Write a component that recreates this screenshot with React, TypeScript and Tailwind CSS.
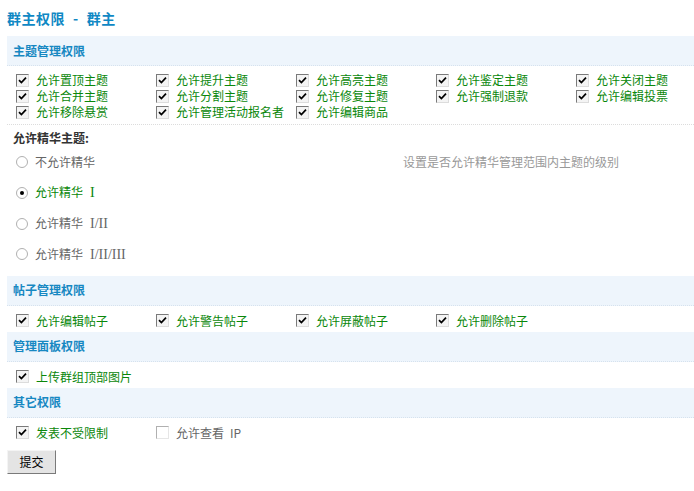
import React from 'react';

const font = { fontFamily: '"Noto Sans CJK SC", "Liberation Sans", sans-serif' };
const serif = { fontFamily: '"Liberation Serif", serif' };

const topicPerms = [
    '允许置顶主题', '允许提升主题', '允许高亮主题', '允许鉴定主题', '允许关闭主题',
    '允许合并主题', '允许分割主题', '允许修复主题', '允许强制退款', '允许编辑投票',
    '允许移除悬赏', '允许管理活动报名者', '允许编辑商品',
];

const postPerms = ['允许编辑帖子', '允许警告帖子', '允许屏蔽帖子', '允许删除帖子'];

const digestLevels = [
    { text: '不允许精华', num: '' },
    { text: '允许精华', num: 'I' },
    { text: '允许精华', num: 'I/II' },
    { text: '允许精华', num: 'I/II/III' },
];

const Check: React.FC<{ label: React.ReactNode; checked?: boolean }> = ({ label, checked = true }) => (
    <label className="flex items-center h-[16px] gap-[7px] w-[140px]">
        <span
            className={
                checked
                    ? 'w-[13px] h-[13px] border border-t-[#7a7a7a] border-l-[#7a7a7a] border-r-[#dcdcdc] border-b-[#dcdcdc] bg-[#f4f4f4] flex items-center justify-center shrink-0'
                    : 'w-[13px] h-[13px] border border-t-[#b0b0b0] border-l-[#b0b0b0] border-r-[#e6e6e6] border-b-[#e6e6e6] bg-white shrink-0'
            }
        >
            {checked && (
                <svg width="9" height="9" viewBox="0 0 9 9">
                    <path d="M1 4.2 L3.4 6.6 L8 1.6" stroke="#000" strokeWidth="1.7" fill="none" />
                </svg>
            )}
        </span>
        <span className={checked ? 'text-[12px] text-[#0a870a] whitespace-nowrap' : 'text-[12px] text-[#666] whitespace-nowrap'}>
            {label}
        </span>
    </label>
);

const SectionHeader: React.FC<{ title: string }> = ({ title }) => (
    <div className="h-[30px] bg-[#eef5fc] border-b border-dotted border-[#d6e2ee] flex items-center pl-[6px]">
        <span className="text-[12px] font-bold text-[#1788c2]">{title}</span>
    </div>
);

export default function App() {
    return (
        <div className="w-[694px] h-[491px] bg-white pl-[7px] pt-[7px] overflow-hidden" style={font}>
            <h1 className="h-[22px] leading-[22px] text-[14px] font-bold text-[#0f88c4] mb-[7px] tracking-[0.5px] flex">
                <span>群主权限</span>
                <span className="mx-[8px]">-</span>
                <span>群主</span>
            </h1>

            <SectionHeader title="主题管理权限" />
            <div className="grid grid-cols-[repeat(5,140px)] pl-[9px] pt-[6px] pb-[4px] border-b border-dotted border-[#dcdcdc]">
                {topicPerms.map((p) => (
                    <Check key={p} label={p} />
                ))}
            </div>

            <div className="h-[26px] flex items-center pl-[6px]">
                <span className="text-[12px] font-bold text-[#333]">允许精华主题:</span>
            </div>
            <div className="flex mt-[-4px] pb-[6px]">
                <div className="w-[396px] pl-[9px]">
                    {digestLevels.map((lv, i) => (
                        <div key={lv.text + lv.num} className="h-[30.67px] flex items-center gap-[7px]">
                            <span className="w-[12px] h-[12px] rounded-full border border-[#b0b0b0] bg-white flex items-center justify-center shrink-0">
                                {i === 1 && <span className="w-[4px] h-[4px] rounded-full bg-black" />}
                            </span>
                            <span className={i === 1 ? 'text-[12px] text-[#0a870a]' : 'text-[12px] text-[#666]'}>
                                {lv.text}
                                {lv.num && (
                                    <span className="ml-[7px] text-[14px]" style={serif}>
                                        {lv.num}
                                    </span>
                                )}
                            </span>
                        </div>
                    ))}
                </div>
                <div className="h-[30.67px] flex items-center">
                    <span className="text-[12px] text-[#999]">设置是否允许精华管理范围内主题的级别</span>
                </div>
            </div>

            <SectionHeader title="帖子管理权限" />
            <div className="h-[26px] flex pl-[9px] pt-[7px]">
                {postPerms.map((p) => (
                    <Check key={p} label={p} />
                ))}
            </div>

            <SectionHeader title="管理面板权限" />
            <div className="h-[26px] flex pl-[9px] pt-[7px]">
                <Check label="上传群组顶部图片" />
            </div>

            <SectionHeader title="其它权限" />
            <div className="h-[30px] flex pl-[9px] pt-[7px]">
                <Check label="发表不受限制" />
                <Check
                    label={
                        <>
                            允许查看<span className="ml-[6px]">IP</span>
                        </>
                    }
                    checked={false}
                />
            </div>

            <button className="w-[49px] h-[24px] bg-[#e4e4e4] border border-t-[#f4f4f4] border-l-[#f4f4f4] border-r-[#7a7a7a] border-b-[#7a7a7a] text-[12px] text-black">
                提交
            </button>
        </div>
    );
}
